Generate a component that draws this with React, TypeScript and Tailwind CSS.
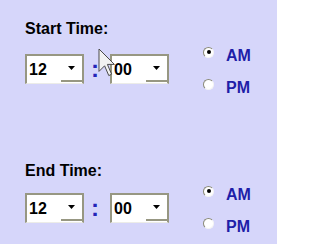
import { FC } from 'react';

const Select: FC<{ value: string }> = ({ value }) => (
  <div className="flex w-[59px] h-[30px] bg-white border-t-2 border-l-2 border-r-2 border-b border-[#979782] border-b-[#ecece8]">
    <span className="flex-1 flex items-center pl-[2px] text-[16px] font-bold leading-none text-black">
      {value}
    </span>
    <div className="w-[21px] mb-[1px] flex items-center justify-center border-b-2 border-[#979782]">
      <svg width="7" height="4" viewBox="0 0 7 4">
        <polygon points="0,0 7,0 3.5,4" fill="#000" />
      </svg>
    </div>
  </div>
);

const Radio: FC<{ label: string; checked?: boolean }> = ({ label, checked }) => (
  <div className="flex items-center h-[16px] gap-[12px]">
    <span className="w-[11px] h-[11px] rounded-full bg-white border border-[#8a8a78] border-b-[#f4f4f4] border-r-[#f4f4f4] flex items-center justify-center">
      {checked && <span className="w-[4px] h-[4px] rounded-full bg-black" />}
    </span>
    <span className="mt-[8px] text-[16px] font-bold leading-[16px] text-[#1e1ea8]">{label}</span>
  </div>
);

const TimeGroup: FC<{ title: string; first?: boolean; className?: string }> = ({
  title,
  first,
  className,
}) => (
  <div className={`flex items-start ${className ?? ''}`}>
    <div className="flex flex-col">
      <span className="h-[16px] text-[16px] leading-[16px] font-bold text-black">{title}</span>
      <div className={`flex items-center h-[30px] ${first ? 'mt-[17px]' : 'mt-[14px]'}`}>
        <Select value="12" />
        <span className="ml-[7px] mr-[11px] w-[8px] h-[30px] text-[24px] leading-[30px] font-bold text-[#2424b8]">
          :
        </span>
        <Select value="00" />
      </div>
    </div>
    <div className={`flex flex-col gap-[16px] ml-[34px] ${first ? 'mt-[23px]' : 'mt-[20px]'}`}>
      <Radio label="AM" checked />
      <Radio label="PM" />
    </div>
  </div>
);

const App: FC = () => {
  return (
    <div className="relative w-[277px] h-[244px] overflow-hidden bg-[#d6d6fa] pl-[25px] pt-[21px] font-['Liberation_Sans',Arial,sans-serif]">
      <TimeGroup title="Start Time:" first />
      <TimeGroup title="End Time:" className="mt-[71px]" />

      {/* mouse pointer over the minutes box */}
      <svg
        className="absolute left-[98px] top-[48px]"
        width="18"
        height="30"
        viewBox="-1 -1 18 30"
      >
        <polygon
          points="0,0 0,22.4 5.6,16.8 9.8,26.6 12.6,25.2 8.4,15.4 15.4,15.4"
          fill="#f2f2f2"
          stroke="#4a4a4a"
          strokeWidth="1"
          strokeLinejoin="round"
        />
      </svg>
    </div>
  );
};

export default App;
